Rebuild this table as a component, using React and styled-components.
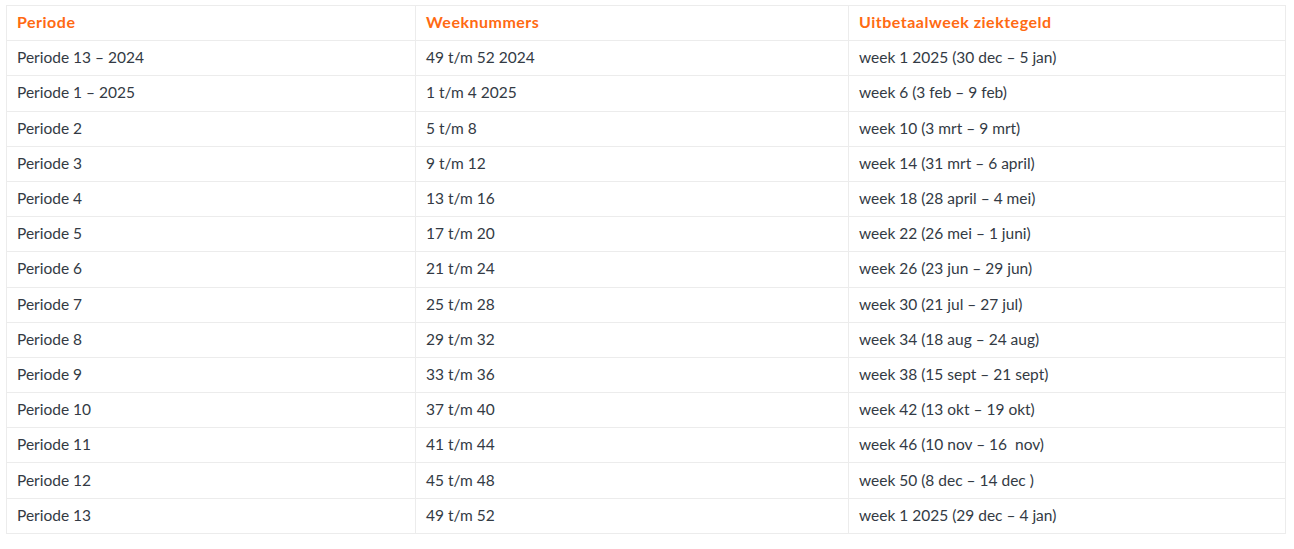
import React from "react";
import styled, { createGlobalStyle } from "styled-components";

const GlobalStyle = createGlobalStyle`
  body {
    margin: 0;
    background: #fff;
    font-family: Lato, "Open Sans", sans-serif;
  }
`;

const Wrapper = styled.div`
  padding: 5px 10px 0 6px;
`;

const Table = styled.table`
  width: 1279px;
  border-collapse: collapse;
  table-layout: fixed;
  color: #333a44;
  font-size: 15.5px;
`;

const Cell = styled.td`
  height: 35.2px;
  padding: 0 10px 2px;
  border: 1px solid #ececec;
  vertical-align: middle;
  box-sizing: border-box;
  white-space: pre;
`;

const HeadCell = styled(Cell).attrs({ as: "th" })`
  color: #ff6a13;
  font-size: 16px;
  font-weight: 700;
  letter-spacing: 0.5px;
  text-align: left;
  padding-bottom: 3px;
`;

const rows = [
  ["Periode 13 – 2024", "49 t/m 52 2024", "week 1 2025 (30 dec – 5 jan)"],
  ["Periode 1 – 2025", "1 t/m 4 2025", "week 6 (3 feb – 9 feb)"],
  ["Periode 2", "5 t/m 8", "week 10 (3 mrt – 9 mrt)"],
  ["Periode 3", "9 t/m 12", "week 14 (31 mrt – 6 april)"],
  ["Periode 4", "13 t/m 16", "week 18 (28 april – 4 mei)"],
  ["Periode 5", "17 t/m 20", "week 22 (26 mei – 1 juni)"],
  ["Periode 6", "21 t/m 24", "week 26 (23 jun – 29 jun)"],
  ["Periode 7", "25 t/m 28", "week 30 (21 jul – 27 jul)"],
  ["Periode 8", "29 t/m 32", "week 34 (18 aug – 24 aug)"],
  ["Periode 9", "33 t/m 36", "week 38 (15 sept – 21 sept)"],
  ["Periode 10", "37 t/m 40", "week 42 (13 okt – 19 okt)"],
  ["Periode 11", "41 t/m 44", "week 46 (10 nov – 16  nov)"],
  ["Periode 12", "45 t/m 48", "week 50 (8 dec – 14 dec )"],
  ["Periode 13", "49 t/m 52", "week 1 2025 (29 dec – 4 jan)"]
];

export default function App() {
  return (
    <Wrapper>
      <GlobalStyle />
      <Table>
        <colgroup>
          <col style={{ width: 409 }} />
          <col style={{ width: 433 }} />
          <col style={{ width: 437 }} />
        </colgroup>
        <thead>
          <tr>
            <HeadCell>Periode</HeadCell>
            <HeadCell>Weeknummers</HeadCell>
            <HeadCell>Uitbetaalweek ziektegeld</HeadCell>
          </tr>
        </thead>
        <tbody>
          {rows.map((r, i) => (
            <tr key={i}>
              {r.map((c, j) => (
                <Cell key={j}>{c}</Cell>
              ))}
            </tr>
          ))}
        </tbody>
      </Table>
    </Wrapper>
  );
}
